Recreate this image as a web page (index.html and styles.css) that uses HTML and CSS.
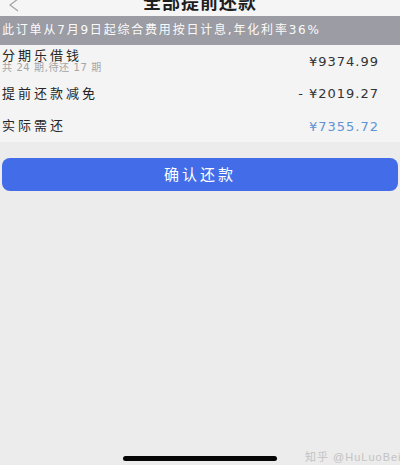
FILE: index.html
```html
<!DOCTYPE html>
<html lang="zh-CN">
  <head>
    <meta charset="UTF-8" />
    <meta name="viewport" content="width=device-width, initial-scale=1.0" />
    <title>全部提前还款</title>
    <link rel="stylesheet" href="styles.css">
  </head>
  <body>
    <div class="page">
      <div class="topbar">
        <div class="back">
          <svg width="12" height="14" viewBox="0 0 12 14">
            <polyline points="10,-1 2,5 10,11" fill="none" stroke="#a3a3a3" stroke-width="1.2" />
          </svg>
        </div>
        <div class="title">全部提前还款</div>
        <div></div>
      </div>

      <div class="notice">此订单从7月9日起综合费用按日计息,年化利率36%</div>

      <div class="bill">
        <div class="row">
          <div class="label">
            <div class="name">分期乐借钱</div>
            <div class="sub">共 24 期,待还 17 期</div>
          </div>
          <div class="amount">¥9374.99</div>
        </div>
        <div class="row row-mid">
          <div class="name">提前还款减免</div>
          <div class="amount">- ¥2019.27</div>
        </div>
        <div class="row">
          <div class="name">实际需还</div>
          <div class="amount total">¥7355.72</div>
        </div>
      </div>

      <div class="confirm">确认还款</div>

      <div class="watermark">知乎 @HuLuoBei</div>
      <div class="home-bar"></div>
    </div>
  </body>
</html>
```

FILE: styles.css
```css
html,
body {
  margin: 0;
  padding: 0;
  overflow: hidden;
}

body {
  background: #ebeceb;
  font-family: "Liberation Sans", "Noto Sans CJK SC", sans-serif;
}

.page {
  position: relative;
  width: 400px;
  height: 465px;
  overflow: hidden;
}

.topbar {
  display: grid;
  grid-template-columns: 40px 1fr 40px;
  height: 16px;
  background: #f5f5f5;
  overflow: hidden;
}

.back {
  padding-left: 8px;
}

.back svg {
  display: block;
}

.title {
  margin-top: -6px;
  text-align: center;
  font-size: 18px;
  line-height: 18px;
  font-weight: bold;
  letter-spacing: 1px;
  color: #1e1e1e;
}

.notice {
  height: 29px;
  line-height: 29px;
  padding-left: 2px;
  background: #9b9ca4;
  color: #fbfbfb;
  font-family: "DejaVu Sans", "Noto Sans CJK SC", sans-serif;
  font-size: 12px;
  letter-spacing: 1.8px;
  white-space: nowrap;
}

.bill {
  background: #f4f4f4;
}

.row {
  display: flex;
  justify-content: space-between;
  align-items: center;
  height: 32px;
  padding: 0 21px 0 2px;
}

.row-mid {
  height: 33px;
}

.name {
  font-size: 13px;
  line-height: 12px;
  letter-spacing: 3px;
  color: #262626;
}

.sub {
  font-family: "DejaVu Sans", "Noto Sans CJK SC", sans-serif;
  font-size: 10px;
  line-height: 11px;
  letter-spacing: 0.6px;
  color: #a5a5a5;
}

.amount {
  font-family: "DejaVu Sans", sans-serif;
  font-size: 13px;
  letter-spacing: 1px;
  color: #333;
}

.amount.total {
  color: #5f93d4;
}

.confirm {
  margin: 16px 2px 0;
  height: 33px;
  line-height: 33px;
  border-radius: 8px;
  background: #426ce8;
  color: #fff;
  text-align: center;
  font-size: 15px;
  letter-spacing: 3px;
}

.watermark {
  position: absolute;
  left: 305px;
  top: 448px;
  font-size: 11px;
  letter-spacing: 1px;
  color: #c3c3c3;
  white-space: nowrap;
}

.home-bar {
  position: absolute;
  left: 123px;
  top: 456px;
  width: 154px;
  height: 5px;
  border-radius: 3px;
  background: #050505;
}
```
